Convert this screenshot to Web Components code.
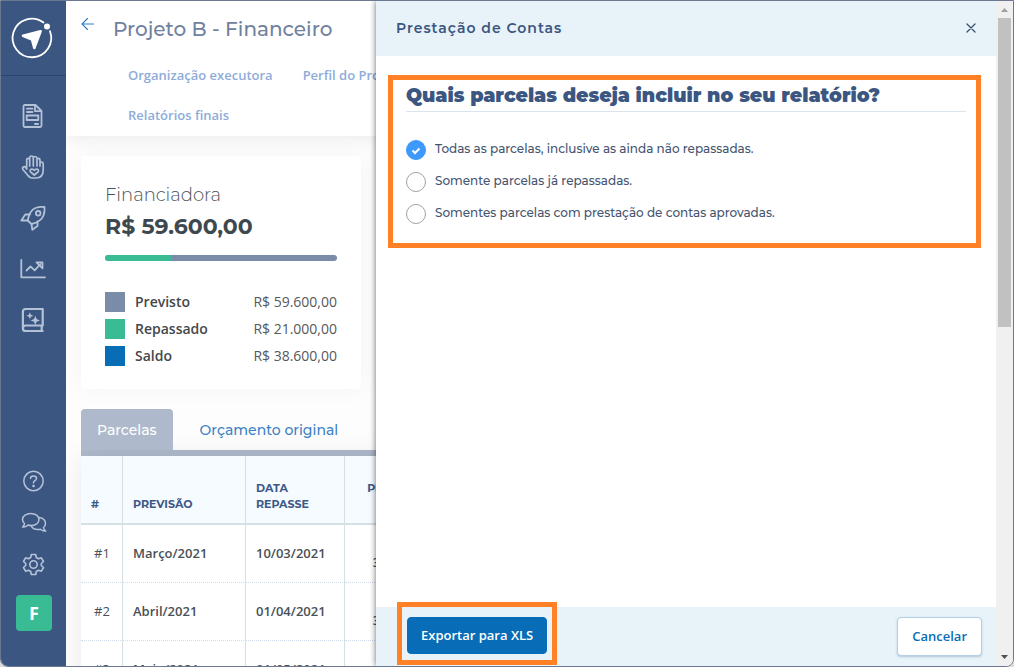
<!DOCTYPE html>
<html lang="pt-BR">
<head>
<meta charset="utf-8">
<title>Projeto B - Financeiro</title>
<style>
    html, body {
        height: 100%;
        margin: 0;
    }
    body {
        --navy: #3b5681;
        --blue: #086db6;
        --green: #39bb94;
        --slate: #7b8ca9;
        --tab: #aeb9cb;
        --panel: #e7f2f9;
        --highlight: #ff8025;
        --heading-font: Montserrat, Inter, "Liberation Sans", sans-serif;
        --body-font: "Open Sans", "Noto Sans", sans-serif;
        background: #dcdcdc;
        font-family: var(--body-font);
        font-size: 13px;
        line-height: 16px;
        color: #4a5156;
        overflow: hidden;
    }
</style>
</head>
<body>
<app-window>
    <side-bar slot="side"></side-bar>
    <project-header slot="main" heading="Projeto B - Financeiro"></project-header>
    <funding-card slot="main" heading="Financiadora" total="R$ 59.600,00">
        <legend-row color="var(--slate)">Previsto<span slot="value">R$ 59.600,00</span></legend-row>
        <legend-row color="var(--green)">Repassado<span slot="value">R$ 21.000,00</span></legend-row>
        <legend-row color="var(--blue)">Saldo<span slot="value">R$ 38.600,00</span></legend-row>
    </funding-card>
    <tab-bar slot="main"></tab-bar>
    <parcel-table slot="main"></parcel-table>
    <side-drawer slot="drawer" heading="Prestação de Contas">
        <choice-list></choice-list>
        <highlight-frame slot="footer"><action-button kind="primary">Exportar para XLS</action-button></highlight-frame>
        <action-button slot="footer" kind="secondary">Cancelar</action-button>
    </side-drawer>
    <scroll-rail slot="rail"></scroll-rail>
</app-window>

<script>
class BaseElement extends HTMLElement {
    constructor(){
        super();
        this.attachShadow({ mode: "open" });
    }
    connectedCallback(){
        this.shadowRoot.innerHTML = `
            <style>
                * { box-sizing: border-box; }
                ${this.getStyles()}
            </style>
            ${this.getContentHTML()}
        `;
    }
    getStyles(){
        return "";
    }
    getContentHTML(){
        return "<slot></slot>";
    }
}

//icons ###
const icons = {
    logo: `
        <path d="M31.500 4.500A19.300 19.300 0 1 0 38 13.200" stroke-width="1.800"/>
        <circle cx="35" cy="8.500" r="3" fill="currentColor" stroke="none"/>
        <path d="M28.600 13.200 11 17.700 20 21.500 22.300 30Z" fill="currentColor" stroke-width="2.600"/>`,
    report: `
        <path d="M4 1H14.500L20.500 7V21.500Q20.500 23 19 23H4Q2.500 23 2.500 21.500V2.500Q2.500 1 4 1"/>
        <path d="M14 1.500V7.200H20"/>
        <path d="M6 4.700H11.500M6 8H11.500M14 20H17"/>
        <path d="M5.700 11.500H17.300V16H5.700Z"/>`,
    hand: `
        <path d="M5.700 14V4.900Q5.700 3.400 7.200 3.400T8.700 4.900V11M8.700 4.500V3Q8.700 1 10.500 1T12.300 3V11M12.300 3Q12.500 1.500 14.200 1.500T16 3.200V11M16 5Q16 3.400 17.500 3.400T19 5V11M19 8.500Q19.200 7 20.600 7T22.200 8.500V15Q22.200 23 15 23H10.700Q8.500 23 7 20.500L1.900 14.500Q1 12.500 2.500 11.800T4.700 12.500L5.700 14"/>
        <path d="M13.300 20 9.500 16.800C8 14.500 11.500 13 13.300 15.300C15.100 13 18.600 14.500 17.100 16.800Z"/>`,
    rocket: `
        <path d="M6.700 14.500Q8.500 4.500 14.500 2Q18.500.5 23.500 1Q23.900 6 22.500 9.500Q20 16 10.500 18Z"/>
        <circle cx="17.200" cy="7.300" r="2.300"/>
        <path d="M8.800 8.500H4.300L.3 14.500 6.700 14.500M16.500 15.500V20L11.300 23.700 10.500 18"/>`,
    chart: `
        <path d="M.3 3V20.300H24"/>
        <path d="M5.500 13.500 9.500 9.500 13.700 13.300 19.500 7"/>
        <path d="M15.500 5.300H21.500V11.300Z"/>`,
    book: `
        <path d="M4.500 1H21.700V17.500H4.500Q1.900 17.500 1.900 20.200V3.700Q1.900 1 4.500 1M1.900 20.200Q1.900 23 4.500 23H21.700M20.700 17.500V23"/>
        <path d="M8.900 4.300 9.900 6.800 12.400 7.800 9.900 8.800 8.900 11.300 7.900 8.800 5.400 7.800 7.900 6.800ZM14.300 7.800 15.600 11.100 18.900 12.400 15.600 13.700 14.300 17 13 13.700 9.700 12.400 13 11.100Z" fill="currentColor" stroke="none"/>`,
    help: `
        <circle cx="11.500" cy="12" r="9.700"/>
        <path d="M8.500 9.500Q8.500 7 11.500 7T14.500 9.500Q14.500 11 12.700 11.800Q11.500 12.400 11.500 14"/>
        <circle cx="11.500" cy="17" r="1.300" fill="currentColor" stroke="none"/>`,
    chat: `
        <path d="M.5 16Q2.500 14.500 2.500 12.500Q.5 11 .5 8.500C.5 5 4.300 2.500 8.800 2.500S17 5 17 8.500 13.500 14.500 9 14.500Q7.500 14.500 6 14Q3.500 16.500 .5 16Z"/>
        <path d="M17 6.500C21 7 23.500 9 23.500 12.500Q23.500 15 21.500 16.500Q21.500 18.500 23.700 20Q21 20.500 18.500 18.300C14.500 19 10.500 18 9 14.500"/>`,
    gear: `
        <path d="M9.300 1.500H13.700L14.300 4.500 16.500 5.800 19.400 4.800 21.500 8.500 19.300 10.500V12.500L21.500 14.500 19.400 18.200 16.500 17.200 14.300 18.500 13.700 21.500H9.300L8.700 18.500 6.500 17.200 3.600 18.200 1.500 14.500 3.700 12.500V10.500L1.500 8.500 3.600 4.800 6.500 5.800 8.700 4.500Z"/>
        <circle cx="11.500" cy="11.500" r="3.700"/>`,
    back: `<path d="M6.500 1.500 1 7 6.500 12.500M1 7H12.500" stroke-width="1.100"/>`,
    close: `<path d="M1 1 9 9M9 1 1 9"/>`
};
const iconBoxes = { logo: "0 0 40 40", back: "0 0 14 14", close: "0 0 10 10" };

class AppIcon extends BaseElement {
    getStyles(){
        return `
            :host { display: block; width: 24px; height: 24px; flex: none; }
            svg { display: block; width: 100%; height: 100%; overflow: visible; }
        `;
    }
    getContentHTML(){
        const name = this.getAttribute("name");
        return `
            <svg viewBox="${iconBoxes[name] || "0 0 24 24"}" fill="none" stroke="currentColor"
                stroke-width="${this.getAttribute("weight") || "1.500"}" stroke-linejoin="round" stroke-linecap="round" aria-hidden="true">${icons[name]}</svg>
        `;
    }
}
customElements.define("app-icon", AppIcon);

//window ###
class AppWindow extends BaseElement {
    getStyles(){
        return `
            :host {
                display: grid;
                grid-template-columns: 65px minmax(0, 1fr) 17px;
                height: 100vh;
                box-sizing: border-box;
                border: 1px solid #6b7890;
                border-radius: 0 0 8px 8px;
                background: #fff;
                overflow: hidden;
            }
            .content {
                position: relative;
                display: flex;
                min-height: 0;
                overflow: hidden;
            }
            main {
                flex: 1;
                min-width: 0;
                background: #fdfdfd;
            }
        `;
    }
    getContentHTML(){
        return `
            <slot name="side"></slot>
            <div class="content">
                <main><slot name="main"></slot></main>
                <slot name="drawer"></slot>
            </div>
            <slot name="rail"></slot>
        `;
    }
}
customElements.define("app-window", AppWindow);

class SideBar extends BaseElement {
    getStyles(){
        return `
            :host {
                display: flex;
                flex-direction: column;
                background: var(--navy);
                color: #b4c2d8;
            }
            a { display: block; color: inherit; text-decoration: none; }
            .logo {
                display: flex;
                justify-content: center;
                padding: 17px 3px 17px 0;
                border-bottom: 1px solid #2b4674;
                color: #fff;
            }
            .logo app-icon { width: 40px; height: 40px; }
            nav, .tools { display: flex; flex-direction: column; align-items: center; }
            nav { gap: 27px; padding: 28px 1px 0 0; }
            .tools { gap: 18px; margin-top: auto; padding: 0 0 35px 1px; }
            .avatar {
                width: 36px;
                border-radius: 4px;
                background: var(--green);
                color: #fff;
                font-size: 18px;
                font-weight: 700;
                line-height: 36px;
                text-align: center;
            }
        `;
    }
    getContentHTML(){
        const link = (name, label, weight) => `
            <a href="#${name}" aria-label="${label}"><app-icon name="${name}" weight="${weight}"></app-icon></a>
        `;
        return `
            <a class="logo" href="#" aria-label="Início"><app-icon name="logo"></app-icon></a>
            <nav>
                ${link("report", "Editais", 1.8)}
                ${link("hand", "Doações", 1.7)}
                ${link("rocket", "Projetos", 1.8)}
                ${link("chart", "Indicadores", 1.8)}
                ${link("book", "Biblioteca", 2.2)}
            </nav>
            <div class="tools">
                ${link("help", "Ajuda", 1.5)}
                ${link("chat", "Mensagens", 1.5)}
                ${link("gear", "Configurações", 1.6)}
                <a class="avatar" href="#perfil">F</a>
            </div>
        `;
    }
}
customElements.define("side-bar", SideBar);

//project page ###
class ProjectHeader extends BaseElement {
    getStyles(){
        return `
            :host {
                display: block;
                padding: 8px 15px 1px;
                background: #fff;
                box-shadow: 0 2px 16px rgba(0, 0, 0, .08);
            }
            .title { display: flex; gap: 18px; }
            .back { padding-top: 8px; color: #2f7fc4; }
            .back app-icon { width: 14px; height: 14px; }
            h1 {
                margin: 0;
                font: 500 20px/40px var(--heading-font);
                color: #71819e;
            }
            nav { padding: 6px 0 0 47px; }
            .links { display: flex; gap: 30px; white-space: nowrap; }
            .links a {
                font-weight: 600;
                line-height: 40px;
                color: #8eacd9;
                text-decoration: none;
            }
        `;
    }
    getContentHTML(){
        return `
            <div class="title">
                <a class="back" href="#voltar" aria-label="Voltar"><app-icon name="back"></app-icon></a>
                <h1>${this.getAttribute("heading")}</h1>
            </div>
            <nav>
                <div class="links">
                    <a href="#organizacao">Organização executora</a>
                    <a href="#perfil">Perfil do Projeto</a>
                </div>
                <div class="links"><a href="#relatorios">Relatórios finais</a></div>
            </nav>
        `;
    }
}
customElements.define("project-header", ProjectHeader);

class FundingCard extends BaseElement {
    getStyles(){
        return `
            :host {
                display: block;
                box-sizing: border-box;
                width: 280px;
                margin: 20px 15px;
                padding: 24px 24px 20px;
                border-radius: 4px;
                background: #fff;
                box-shadow: 0 0 24px rgba(0, 0, 0, .04);
            }
            h2 { margin: 0; font: 300 18px/31px var(--heading-font); }
            .total { margin: 0; font: 700 22px/32px var(--heading-font); color: #3e494f; }
            .bar {
                height: 6px;
                margin: 12px 0 27px;
                border-radius: 3px;
                background: var(--slate);
                overflow: hidden;
            }
            .bar div { width: 29%; height: 100%; border-radius: 3px; background: var(--green); }
        `;
    }
    getContentHTML(){
        return `
            <h2>${this.getAttribute("heading")}</h2>
            <p class="total">${this.getAttribute("total")}</p>
            <div class="bar"><div></div></div>
            <slot></slot>
        `;
    }
}
customElements.define("funding-card", FundingCard);

class LegendRow extends BaseElement {
    getStyles(){
        return `
            :host {
                display: flex;
                align-items: center;
                gap: 10px;
                height: 27px;
                font-size: 14px;
                color: #44484b;
            }
            i { width: 20px; height: 20px; background: ${this.getAttribute("color")}; }
            .name { flex: 1; font-weight: 600; }
            .value { font-weight: 400; color: #55595c; }
        `;
    }
    getContentHTML(){
        return `
            <i></i>
            <span class="name"><slot></slot></span>
            <span class="value"><slot name="value"></slot></span>
        `;
    }
}
customElements.define("legend-row", LegendRow);

class TabBar extends BaseElement {
    getStyles(){
        return `
            :host {
                display: flex;
                margin-left: 15px;
                border-bottom: 6px solid var(--tab);
            }
            button {
                border: 0;
                padding: 2px 16px 0;
                border-radius: 4px 4px 0 0;
                background: none;
                font: 500 14px/39px var(--heading-font);
                color: #3c82c4;
            }
            button + button { margin-left: 11px; }
            button[aria-selected="true"] { background: var(--tab); color: #fff; }
        `;
    }
    getContentHTML(){
        return `
            <button role="tab" aria-selected="true">Parcelas</button>
            <button role="tab" aria-selected="false">Orçamento original</button>
        `;
    }
}
customElements.define("tab-bar", TabBar);

const parcels = [
    ["#1", "Março/2021", "10/03/2021", "R$<br>30.000,00"],
    ["#2", "Abril/2021", "01/04/2021", "R$<br>30.000,00"],
    ["#3", "Maio/2021", "01/05/2021", "R$<br>30.000,00"]
];

class ParcelTable extends BaseElement {
    getStyles(){
        return `
            :host { display: block; margin-left: 15px; box-shadow: 0 0 24px rgba(0, 0, 0, .08); }
            table {
                width: 100%;
                table-layout: fixed;
                border-collapse: separate;
                border-spacing: 0;
                background: #fff;
            }
            th, td { padding: 0 10px; border-right: 1px solid #d5e0e5; text-align: left; }
            th {
                height: 69px;
                padding-bottom: 11px;
                border-bottom: 2px solid #d5e0e5;
                background: #f5fbff;
                font: 700 11px/16px var(--heading-font);
                color: #3d5887;
                vertical-align: bottom;
            }
            td {
                height: 58px;
                padding-bottom: 1px;
                border-bottom: 1px dotted #cfdbea;
                font-weight: 600;
                line-height: 18px;
            }
            td:first-child { padding-left: 13px; font-weight: 500; }
            .index { width: 42px; }
            .planned { width: 123px; }
            .date { width: 99px; }
            .amount { width: 98px; }
            th:nth-child(4), td:nth-child(4) { text-align: right; }
        `;
    }
    getContentHTML(){
        return `
            <table>
                <colgroup><col class="index"><col class="planned"><col class="date"><col class="amount"><col></colgroup>
                <thead><tr><th>#</th><th>PREVISÃO</th><th>DATA<br>REPASSE</th><th>PREVISTOS<br>(R$)</th><th></th></tr></thead>
                <tbody>
                    ${parcels.map(row => `<tr>${row.map(cell => `<td>${cell}</td>`).join("")}<td></td></tr>`).join("")}
                </tbody>
            </table>
        `;
    }
}
customElements.define("parcel-table", ParcelTable);

//drawer ###
class SideDrawer extends BaseElement {
    getStyles(){
        return `
            :host {
                position: absolute;
                top: 0;
                right: 0;
                bottom: 0;
                display: flex;
                flex-direction: column;
                width: min(100%, 620px);
                background: #fff;
                box-shadow: 0 0 6px rgba(0, 0, 0, .6);
            }
            header {
                display: flex;
                align-items: center;
                justify-content: space-between;
                height: 55px;
                padding: 0 15px 1px 20px;
                background: var(--panel);
                color: var(--navy);
            }
            h2 { margin: 0; font: 600 14px/20px var(--heading-font); letter-spacing: 1px; }
            header button { padding: 5px; border: 0; background: none; color: #3a5070; }
            header app-icon { width: 10px; height: 10px; }
            .body { flex: 1; padding: 19px 15px 19px 12px; }
            footer {
                display: flex;
                align-items: flex-start;
                justify-content: space-between;
                padding: 10px 14px 10px 31px;
                background: var(--panel);
            }
        `;
    }
    getContentHTML(){
        return `
            <header>
                <h2>${this.getAttribute("heading")}</h2>
                <button aria-label="Fechar"><app-icon name="close" weight="1.300"></app-icon></button>
            </header>
            <div class="body"><slot></slot></div>
            <footer><slot name="footer"></slot></footer>
        `;
    }
}
customElements.define("side-drawer", SideDrawer);

class ChoiceList extends BaseElement {
    getStyles(){
        return `
            :host {
                display: block;
                padding: 0 10px 13px 13px;
                border: 5px solid var(--highlight);
                font-family: var(--heading-font);
                color: #44546f;
            }
            fieldset { min-width: 0; margin: 0; padding: 0; border: 0; }
            legend {
                width: 100%;
                margin-bottom: 22px;
                padding: 0;
                border-bottom: 1px solid #dbe4ee;
                font-size: 19px;
                font-weight: 900;
                line-height: 31px;
                color: var(--navy);
            }
            label { display: flex; align-items: center; gap: 9px; height: 32px; }
            input {
                appearance: none;
                flex: none;
                width: 20px;
                height: 20px;
                margin: 0;
                border: 1px solid #a79fa4;
                border-radius: 50%;
            }
            input:checked {
                border-color: #3d99fb;
                background: #3d99fb url("data:image/svg+xml,%3Csvg xmlns='http://www.w3.org/2000/svg' viewBox='0 0 18 18'%3E%3Cpath d='M5.500 9.500 8 12 12.500 7.500' fill='none' stroke='white' stroke-width='2'/%3E%3C/svg%3E");
            }
            span { padding-bottom: 2px; font-size: 12px; font-weight: 500; }
        `;
    }
    getContentHTML(){
        const options = [
            "Todas as parcelas, inclusive as ainda não repassadas.",
            "Somente parcelas já repassadas.",
            "Somentes parcelas com prestação de contas aprovadas."
        ];
        return `
            <fieldset>
                <legend>Quais parcelas deseja incluir no seu relatório?</legend>
                ${options.map((text, i) => `
                    <label><input type="radio" name="parcelas" ${i === 0 ? "checked" : ""}><span>${text}</span></label>
                `).join("")}
            </fieldset>
        `;
    }
}
customElements.define("choice-list", ChoiceList);

class HighlightFrame extends BaseElement {
    getStyles(){
        return `
            :host { display: block; position: relative; }
            :host::after {
                content: "";
                position: absolute;
                inset: -15px -10px -11px;
                border: 5px solid var(--highlight);
                pointer-events: none;
            }
        `;
    }
}
customElements.define("highlight-frame", HighlightFrame);

class ActionButton extends BaseElement {
    getStyles(){
        return `
            :host { display: block; }
            button {
                display: block;
                border: 1px solid var(--blue);
                border-radius: 4px;
                font: 600 13px/35px var(--body-font);
            }
            .primary { padding: 0 13px; background: var(--blue); color: #fff; }
            .secondary {
                padding: 0 14px;
                border-color: #b5cfe5;
                background: #fff;
                box-shadow: 0 1px 2px rgba(60, 100, 140, .3);
                line-height: 37px;
                color: var(--blue);
            }
        `;
    }
    getContentHTML(){
        return `<button class="${this.getAttribute("kind")}"><slot></slot></button>`;
    }
}
customElements.define("action-button", ActionButton);

class ScrollRail extends BaseElement {
    getStyles(){
        return `
            :host { display: flex; flex-direction: column; background: #f0f0f0; }
            svg { display: block; width: 17px; height: 17px; }
            .track { flex: 1; padding: 0 2px; }
            .thumb { height: 49%; background: #c1c1c1; }
        `;
    }
    getContentHTML(){
        return `
            <svg viewBox="0 0 17 17"><path d="M5 11 8.500 7 12 11Z" fill="#a0a0a0"/></svg>
            <div class="track"><div class="thumb"></div></div>
            <svg viewBox="0 0 17 17"><path d="M5 6 8.500 10 12 6Z" fill="#505050"/></svg>
        `;
    }
}
customElements.define("scroll-rail", ScrollRail);
</script>
</body>
</html>
